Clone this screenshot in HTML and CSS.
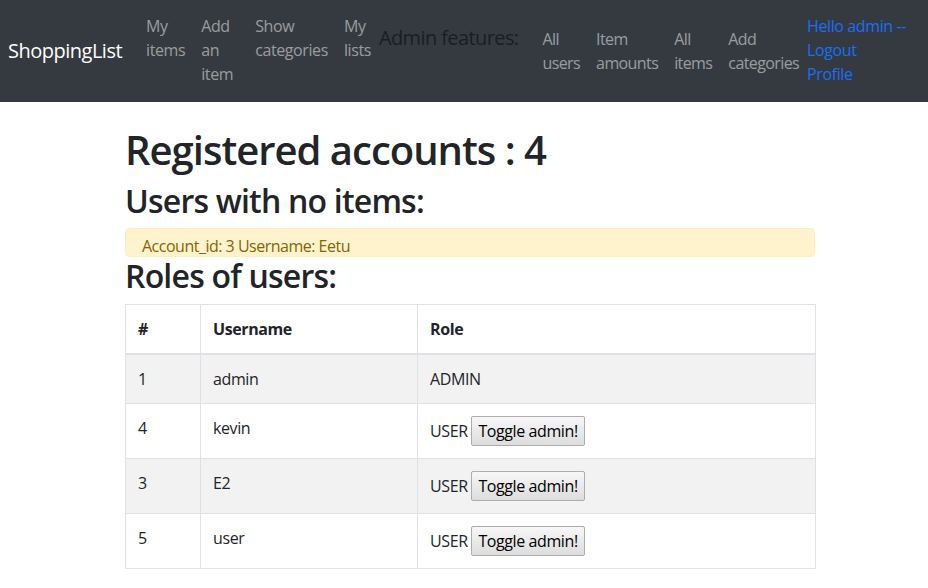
FILE: index.html
```html
<!DOCTYPE html>
<html lang="en">
<head>
<meta charset="utf-8">
<title>ShoppingList</title>
<link rel="stylesheet" href="styles.css">
</head>
<body>
<nav class="navbar">
  <a class="brand" href="#">ShoppingList</a>
  <ul class="nav nav-top">
    <li><a class="nav-link" href="#">My items</a></li>
    <li><a class="nav-link wide" href="#">Add an item</a></li>
    <li><a class="nav-link" href="#">Show categories</a></li>
    <li><a class="nav-link" href="#">My lists</a></li>
  </ul>
  <span class="admin-label">Admin features:</span>
  <ul class="nav nav-mid">
    <li><a class="nav-link" href="#">All users</a></li>
    <li><a class="nav-link" href="#">Item amounts</a></li>
    <li><a class="nav-link" href="#">All items</a></li>
    <li><a class="nav-link" href="#">Add categories</a></li>
  </ul>
  <div class="user-box">
    <div>Hello admin --</div>
    <a class="user-link" href="#">Logout</a>
    <a class="user-link" href="#">Profile</a>
  </div>
</nav>

<main class="container">
  <h1 class="title">Registered accounts : 4</h1>
  <h2 class="subtitle">Users with no items:</h2>
  <div class="alert">Account_id: 3 Username: Eetu</div>
  <h2 class="subtitle">Roles of users:</h2>
  <table class="table">
    <colgroup>
      <col class="col-id">
      <col class="col-name">
      <col class="col-role">
    </colgroup>
    <thead>
      <tr><th>#</th><th>Username</th><th>Role</th></tr>
    </thead>
    <tbody>
      <tr class="odd"><td>1</td><td>admin</td><td>ADMIN</td></tr>
      <tr><td>4</td><td>kevin</td><td>USER <button class="btn">Toggle admin!</button></td></tr>
      <tr class="odd"><td>3</td><td>E2</td><td>USER <button class="btn">Toggle admin!</button></td></tr>
      <tr><td>5</td><td>user</td><td>USER <button class="btn">Toggle admin!</button></td></tr>
    </tbody>
  </table>
</main>
</body>
</html>
```

FILE: styles.css
```css
* { box-sizing: border-box; }

body {
  margin: 0;
  font-family: "Open Sans", "Noto Sans", sans-serif;
  font-size: 16px;
  line-height: 24px;
  letter-spacing: -0.4px;
  color: #212529;
  background: #fff;
}

.navbar {
  display: flex;
  align-items: center;
  height: 102px;
  padding: 0 8px;
  background: #343a40;
  margin-bottom: 24px;
}

.brand {
  font-size: 20px;
  line-height: 30px;
  letter-spacing: -0.5px;
  color: #fff;
  text-decoration: none;
  margin-right: 16px;
  white-space: nowrap;
}

.nav {
  display: flex;
  list-style: none;
  margin: 0;
  padding: 0;
}

.nav-top {
  align-self: flex-start;
  padding-top: 14px;
}

.nav-link {
  display: block;
  width: min-content;
  box-sizing: content-box;
  padding: 0 8px;
  line-height: 24px;
  color: rgba(255, 255, 255, 0.5);
  text-decoration: none;
}

.nav-link.wide {
  padding-right: 14px;
}

.nav-mid .nav-link {
  letter-spacing: -0.6px;
}

.admin-label {
  align-self: flex-start;
  margin-top: 23px;
  margin-right: 16px;
  font-size: 20px;
  line-height: 30px;
  letter-spacing: -0.6px;
  color: rgba(0, 0, 0, 0.5);
  white-space: nowrap;
}

.user-box {
  align-self: flex-start;
  padding-top: 14px;
  line-height: 24px;
  color: #1a6ff4;
  white-space: nowrap;
}

.user-link {
  display: block;
  color: #1a6ff4;
  text-decoration: none;
}

.container {
  width: 690px;
  margin-left: 125px;
}

.title {
  font-size: 40px;
  font-weight: 600;
  line-height: 48px;
  letter-spacing: -1px;
  margin: 0 0 8px;
}

.subtitle {
  font-size: 32px;
  font-weight: 600;
  line-height: 38.4px;
  letter-spacing: -0.8px;
  margin: 0 0 8px;
}

.alert {
  height: 29px;
  padding: 6px 16px 0;
  border: 1px solid #ffeeba;
  border-radius: 4px;
  background: #fff3cd;
  color: #856404;
  line-height: 22px;
  letter-spacing: -0.5px;
  margin-bottom: 0;
  overflow: hidden;
}

.table {
  width: 690px;
  table-layout: fixed;
  border-collapse: collapse;
  border: 1px solid #dee2e6;
}

.col-id { width: 75px; }
.col-name { width: 217px; }
.col-role { width: 398px; }

.table th,
.table td {
  padding: 12px;
  border: 1px solid #dee2e6;
  text-align: left;
  vertical-align: top;
  line-height: 24px;
}

.table th {
  font-weight: 700;
  border-bottom: 2px solid #dee2e6;
}

.table .odd td {
  background: #f2f2f2;
}

.btn {
  font-family: inherit;
  font-size: 16px;
  line-height: 24px;
  letter-spacing: -0.4px;
  height: 30px;
  padding: 2px 6px;
  border: 1px solid #adadad;
  border-radius: 2px;
  background: linear-gradient(#f7f7f7, #dddddd);
  color: #000;
  vertical-align: baseline;
}
```
